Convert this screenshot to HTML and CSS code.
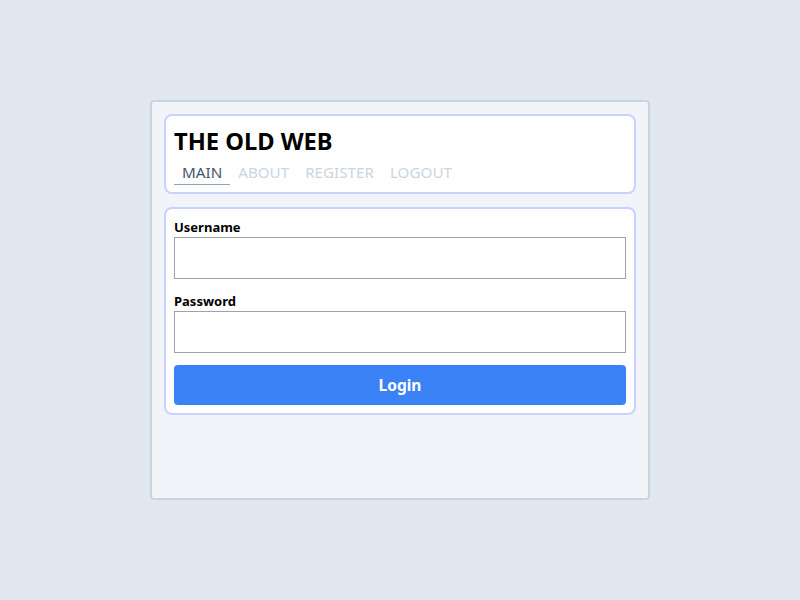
FILE: index.html
```html
<!DOCTYPE html>
<html>
<head>
<meta charset="utf-8">
<link rel="stylesheet" href="styles.css">
</head>
<body>
<div class="page">
  <div class="panel">
    <header class="card header">
      <h1 class="title">THE OLD WEB</h1>
      <nav class="nav">
        <a class="nav-link active">MAIN</a>
        <a class="nav-link">ABOUT</a>
        <a class="nav-link">REGISTER</a>
        <a class="nav-link">LOGOUT</a>
      </nav>
    </header>
    <form class="card form">
      <label class="label">Username</label>
      <input class="input" type="text">
      <label class="label">Password</label>
      <input class="input" type="password">
      <button class="btn" type="button">Login</button>
    </form>
  </div>
</div>
</body>
</html>
```
FILE: styles.css
```css
* { box-sizing: border-box; }
html, body { margin: 0; padding: 0; }
body {
  background: #e2e8f0;
  font-family: "Noto Sans", "Open Sans", sans-serif;
  color: #000;
}
.page {
  width: 800px;
  height: 600px;
  display: flex;
  align-items: center;
  justify-content: center;
}
.panel {
  width: 500px;
  height: 400px;
  background: #f1f5f9;
  border: 2px solid #cbd5e1;
  border-radius: 4px;
  padding: 12px;
  display: flex;
  flex-direction: column;
  gap: 13px;
}
.card {
  background: #fff;
  border: 2px solid #c7d2fe;
  border-radius: 8px;
  padding: 8px;
}
.header { height: 80px; }
.title {
  margin: 0;
  padding-top: 1px;
  font-size: 23.7px;
  font-weight: 700;
  line-height: 32px;
  height: 32px;
}
.nav {
  display: flex;
  height: 29px;
}
.nav-link {
  padding: 4px 8px 0;
  font-size: 15.2px;
  line-height: 24px;
  height: 29px;
  color: #cbd5e1;
  cursor: pointer;
}
.nav-link.active {
  color: #475569;
  border-bottom: 1px solid #94a3b8;
}
.form {
  display: flex;
  flex-direction: column;
}
.label {
  font-size: 13px;
  font-weight: 700;
  line-height: 20px;
  height: 20px;
}
.input {
  height: 42px;
  border: 1px solid #9ca3af;
  border-radius: 0;
  margin: 0 0 12px;
  font: inherit;
  padding: 0 8px;
  background: #fff;
}
.btn {
  height: 40px;
  background: #3b82f6;
  border: none;
  border-radius: 4px;
  color: #fff;
  font-family: inherit;
  font-size: 15.5px;
  font-weight: 700;
}
```
